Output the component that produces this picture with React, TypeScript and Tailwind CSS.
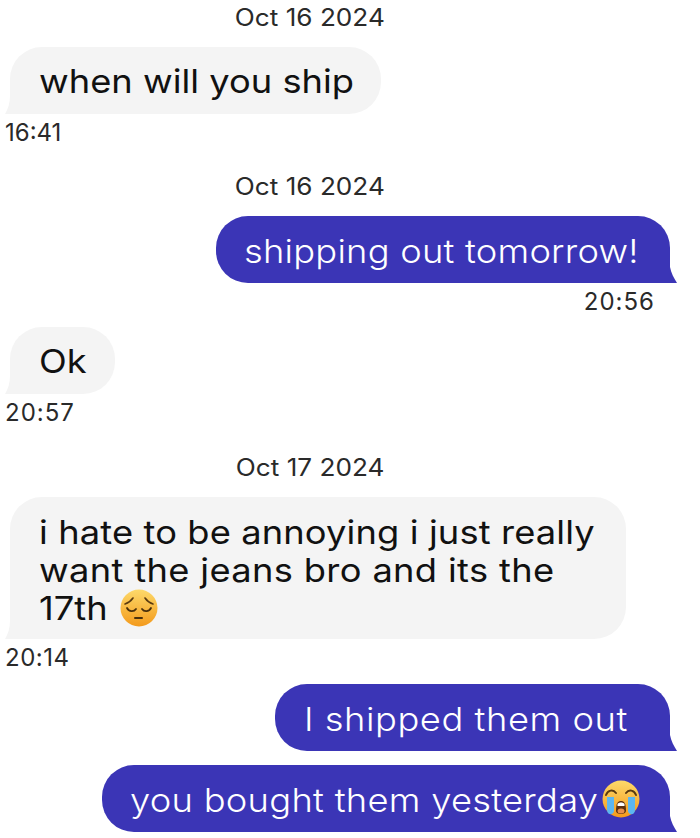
import React from 'react';

const font = { fontFamily: '"Inter", "Liberation Sans", sans-serif' };

const DateLabel: React.FC<{ text: string; className: string }> = ({ text, className }) => (
  <div className={`w-[620px] text-center text-[24px] leading-[28px] text-[#2a2a2a] ${className}`}>
    <span className="inline-block scale-x-[1.09]">{text}</span>
  </div>
);

const Time: React.FC<{ text: string; className: string }> = ({ text, className }) => (
  <div className={`text-[24px] leading-[28px] text-[#2a2a2a] ${className}`}>{text}</div>
);

const Wide: React.FC<{ children: React.ReactNode; className?: string }> = ({ children, className }) => (
  <span className={`inline-block origin-left scale-x-[1.1] whitespace-nowrap ${className ?? ''}`}>{children}</span>
);

const TailLeft = () => (
  <svg className="absolute left-[-5px] bottom-0" width="5" height="18" viewBox="0 0 5 18">
    <path d="M5 0 C5 7 3 13 0 18 L5 18 Z" fill="#f4f4f4" />
  </svg>
);

const TailRight = () => (
  <svg className="absolute right-[-7px] bottom-0" width="7" height="16" viewBox="0 0 7 16">
    <path d="M0 0 C1 6 4 11 7 16 L0 16 Z" fill="#3b35b6" />
  </svg>
);

const Gray: React.FC<{ children: React.ReactNode; className?: string }> = ({ children, className }) => (
  <div className={`relative ml-[10px] rounded-[32px] rounded-bl-none bg-[#f4f4f4] text-[33px] text-[#111111] ${className ?? ''}`}>
    <TailLeft />
    {children}
  </div>
);

const Blue: React.FC<{ children: React.ReactNode; className?: string }> = ({ children, className }) => (
  <div className={`relative mr-[30px] h-[67px] self-end rounded-[32px] rounded-br-none bg-[#3b35b6] text-[33px] font-light leading-[67px] text-white ${className ?? ''}`}>
    <TailRight />
    <div className="flex h-full items-center pt-[4px]">{children}</div>
  </div>
);

const PensiveEmoji = () => (
  <svg className="ml-[19px]" width="38" height="38" viewBox="0 0 38 38">
    <defs>
      <linearGradient id="pensive" x1="0" y1="0" x2="0" y2="1">
        <stop offset="0" stopColor="#fdd96a" />
        <stop offset="1" stopColor="#f39a1c" />
      </linearGradient>
    </defs>
    <circle cx="19" cy="19" r="18.5" fill="url(#pensive)" />
    <path d="M5 15 C8 14 11 12 13 9 M33 15 C30 14 27 12 25 9" stroke="#5a3a10" strokeWidth="1.6" fill="none" strokeLinecap="round" />
    <path d="M7 19 C9 23 14 23 16 20 M22 20 C24 23 29 23 31 19" stroke="#4a300c" strokeWidth="1.8" fill="none" strokeLinecap="round" />
    <path d="M15 29 L22 29" stroke="#4a300c" strokeWidth="2" strokeLinecap="round" />
  </svg>
);

const CryingEmoji = () => (
  <svg className="ml-[46px] mt-[-3px] shrink-0" width="38" height="38" viewBox="0 0 38 38">
    <defs>
      <linearGradient id="crying" x1="0" y1="0" x2="0" y2="1">
        <stop offset="0" stopColor="#fdd96a" />
        <stop offset="1" stopColor="#f49a1c" />
      </linearGradient>
    </defs>
    <circle cx="19" cy="19" r="18.5" fill="url(#crying)" />
    <path d="M5 17 L5 30 C5 35 11 36 12 31 L12 17 Z" fill="#5cb6f0" />
    <path d="M33 17 L33 30 C33 35 27 36 26 31 L26 17 Z" fill="#5cb6f0" />
    <path d="M4 15 C6 10 11 9 14 13 M34 15 C32 10 27 9 24 13" stroke="#5a3a10" strokeWidth="2" fill="none" strokeLinecap="round" />
    <path d="M14 31 C14 23 16 21 19 21 C22 21 24 23 24 31 C24 35 14 35 14 31 Z" fill="#5a3010" />
    <path d="M15.5 24 C17 22 21 22 22.5 24 L22.5 26 L15.5 26 Z" fill="#ffffff" />
    <ellipse cx="19" cy="31" rx="3.5" ry="2.5" fill="#e8904c" />
  </svg>
);

export default function App() {
  return (
    <div className="flex h-[838px] w-[700px] flex-col overflow-hidden bg-white" style={font}>
      <DateLabel text="Oct 16 2024" className="mt-[4px]" />
      <Gray className="mt-[15px] h-[67px] w-[371px] pl-[29px] leading-[68px]"><Wide>when will you ship</Wide></Gray>
      <Time text="16:41" className="ml-[5px] mt-[5px]" />
      <DateLabel text="Oct 16 2024" className="mt-[26px]" />
      <Blue className="mt-[15px] w-[454px] pl-[28px]"><Wide className="tracking-[0.2px]">shipping out tomorrow!</Wide></Blue>
      <Time text="20:56" className="mr-[45px] mt-[5px] self-end tracking-[1px]" />
      <Gray className="mt-[11px] h-[67px] w-[105px] pl-[29px] leading-[69px]"><Wide>Ok</Wide></Gray>
      <Time text="20:57" className="ml-[5px] mt-[5px] tracking-[1px]" />
      <DateLabel text="Oct 17 2024" className="mt-[27px]" />
      <Gray className="mt-[15px] h-[142px] w-[616px] pl-[29px] pt-[16px] leading-[38px]">
        <Wide className="tracking-[0.1px]">i hate to be annoying i just really</Wide>
        <br />
        <Wide className="tracking-[0.3px]">want the jeans bro and its the</Wide>
        <br />
        <span className="inline-flex items-center"><Wide>17th</Wide><PensiveEmoji /></span>
      </Gray>
      <Time text="20:14" className="ml-[5px] mt-[5px] tracking-[0.5px]" />
      <Blue className="mt-[12px] w-[395px] pl-[29px]"><Wide className="tracking-[0.5px]">I shipped them out</Wide></Blue>
      <Blue className="mt-[14px] w-[568px] pl-[28px]"><Wide className="tracking-[0.25px]">you bought them yesterday</Wide><CryingEmoji /></Blue>
    </div>
  );
}
